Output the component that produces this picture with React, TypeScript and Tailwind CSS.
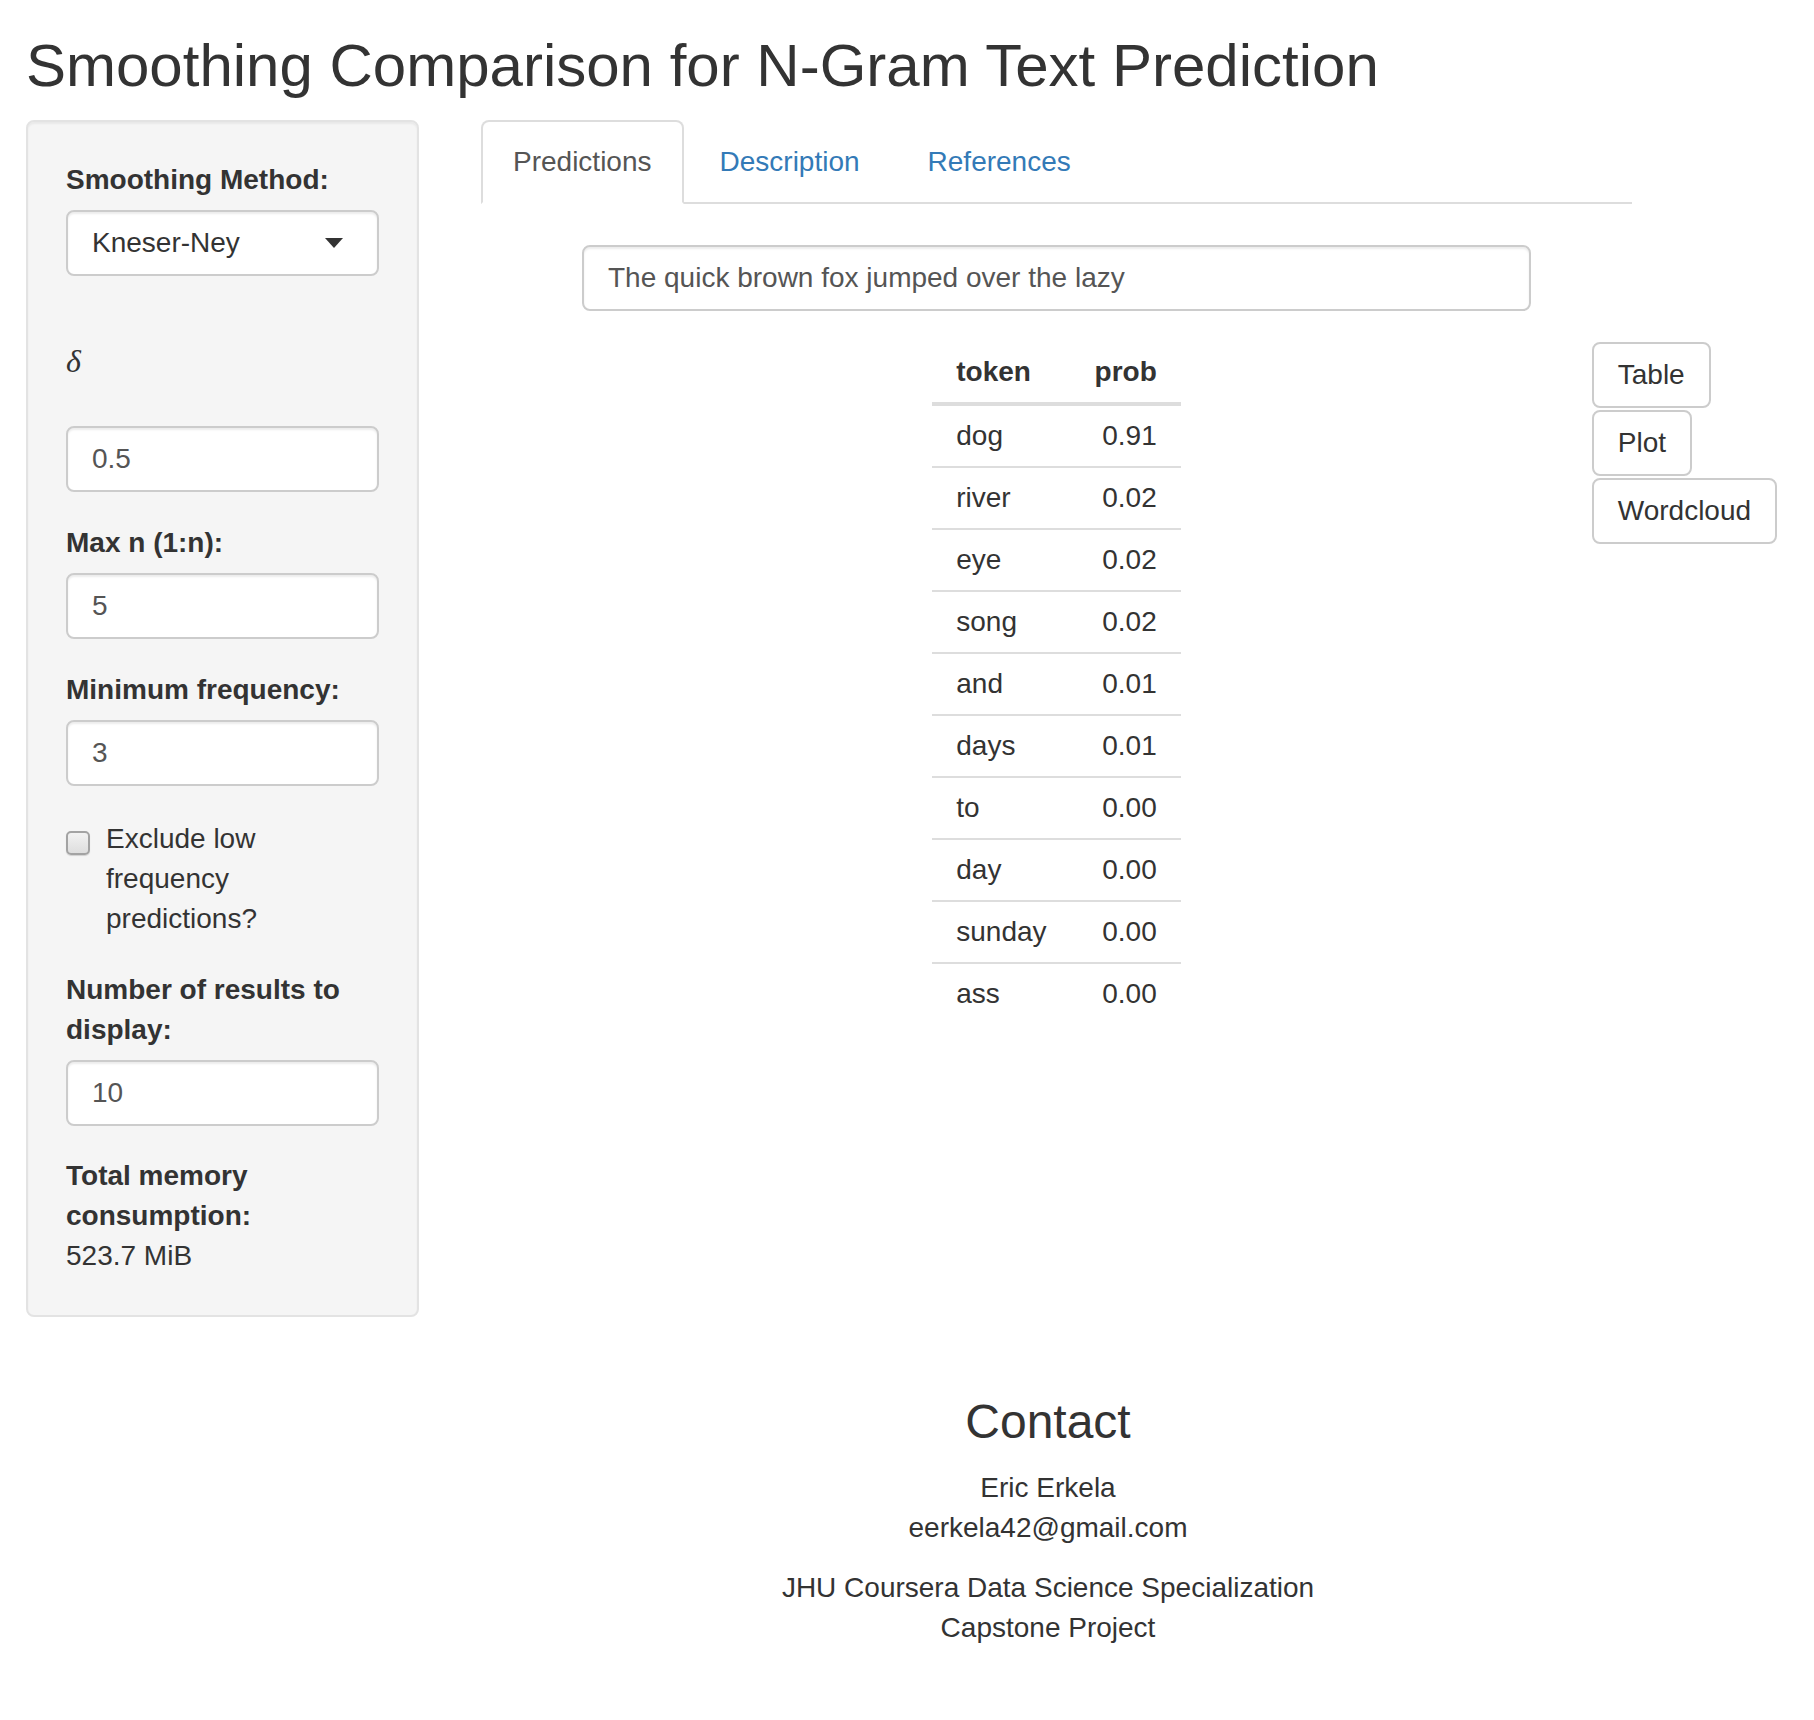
import React from 'react'

const ROWS = [
  { token: 'dog', prob: '0.91' },
  { token: 'river', prob: '0.02' },
  { token: 'eye', prob: '0.02' },
  { token: 'song', prob: '0.02' },
  { token: 'and', prob: '0.01' },
  { token: 'days', prob: '0.01' },
  { token: 'to', prob: '0.00' },
  { token: 'day', prob: '0.00' },
  { token: 'sunday', prob: '0.00' },
  { token: 'ass', prob: '0.00' },
]

function TextBox({ value }: { value: string }) {
  return (
    <div className="h-[66px] w-full rounded-[8px] border-2 border-[#ccc] bg-white px-[24px] py-[11px] leading-[40px] text-[#555] shadow-[inset_0_2px_2px_rgba(0,0,0,0.075)]">
      {value}
    </div>
  )
}

function Label({ children }: { children: React.ReactNode }) {
  return <div className="mb-[10px] font-bold leading-[40px]">{children}</div>
}

export default function App() {
  return (
    <div
      className="min-h-[1720px] bg-white pl-[26px] text-[28px] leading-[40px] text-[#333]"
      style={{ fontFamily: '"Liberation Sans", Arial, sans-serif' }}
    >
      <h1 className="mt-[33px] mb-[21px] text-[60px] font-normal leading-[66px]">
        Smoothing Comparison for N-Gram Text Prediction
      </h1>

      <div className="flex items-start">
        {/* sidebar */}
        <div className="w-[393px] shrink-0 rounded-[8px] border-2 border-[#e3e3e3] bg-[#f5f5f5] px-[38px] pt-[38px] pb-[39px] shadow-[inset_0_2px_2px_rgba(0,0,0,0.05)]">
          <Label>Smoothing Method:</Label>
          <div className="flex h-[66px] items-center justify-between rounded-[8px] border-2 border-[#ccc] bg-white pl-[24px] pr-[34px] shadow-[inset_0_2px_2px_rgba(0,0,0,0.075)]">
            <span>Kneser-Ney</span>
            <span className="h-0 w-0 border-x-[9px] border-t-[10px] border-x-transparent border-t-[#333]" />
          </div>

          <div className="mt-[30px] mb-[10px] flex h-[110px] items-center">
            <span className="text-[32px] italic" style={{ fontFamily: '"Liberation Serif", "Times New Roman", serif' }}>
              δ
            </span>
          </div>
          <TextBox value="0.5" />

          <div className="mt-[31px]">
            <Label>Max n (1:n):</Label>
            <TextBox value="5" />
          </div>

          <div className="mt-[31px]">
            <Label>Minimum frequency:</Label>
            <TextBox value="3" />
          </div>

          <div className="mt-[33px] flex items-start">
            <span className="mt-[12px] h-[24px] w-[24px] shrink-0 rounded-[5px] border-2 border-[#a3a3a3] bg-gradient-to-b from-[#f2f2f2] to-[#dedede] shadow-[0_1px_1px_rgba(0,0,0,0.15)]" />
            <span className="ml-[16px]">Exclude low frequency predictions?</span>
          </div>

          <div className="mt-[31px]">
            <Label>Number of results to display:</Label>
            <TextBox value="10" />
          </div>

          <div className="mt-[30px]">
            <div className="font-bold">Total memory consumption:</div>
            <div>523.7 MiB</div>
          </div>
        </div>

        {/* main panel */}
        <div className="ml-[62px] w-[1151px] shrink-0">
          <ul className="flex border-b-2 border-[#ddd]">
            <li className="-mb-[2px] mr-[4px]">
              <span className="block rounded-t-[8px] border-2 border-[#ddd] border-b-transparent bg-white px-[30px] py-[20px] leading-[40px] text-[#555]">
                Predictions
              </span>
            </li>
            <li className="-mb-[2px] mr-[4px]">
              <span className="block border-2 border-transparent px-[30px] py-[20px] leading-[40px] text-[#337ab7]">
                Description
              </span>
            </li>
            <li className="-mb-[2px] mr-[4px]">
              <span className="block border-2 border-transparent px-[30px] py-[20px] leading-[40px] text-[#337ab7]">
                References
              </span>
            </li>
          </ul>

          <div className="mx-auto mt-[41px] w-[949px]">
            <TextBox value="The quick brown fox jumped over the lazy" />
          </div>

          <div className="mt-[31px] grid grid-cols-[minmax(0,1fr)_auto_minmax(0,1fr)]">
            <div />
            <table className="border-collapse">
              <thead>
                <tr>
                  <th className="border-b-4 border-[#ddd] px-[24px] py-[10px] text-left font-bold leading-[40px]">token</th>
                  <th className="border-b-4 border-[#ddd] px-[24px] py-[10px] text-right font-bold leading-[40px]">prob</th>
                </tr>
              </thead>
              <tbody>
                {ROWS.map((r, i) => (
                  <tr key={r.token} className={i === 0 ? '' : 'border-t-2 border-[#ddd]'}>
                    <td className="px-[24px] py-[10px] leading-[40px]">{r.token}</td>
                    <td className="px-[24px] py-[10px] text-right leading-[40px]">{r.prob}</td>
                  </tr>
                ))}
              </tbody>
            </table>
            <div className="ml-[411px] flex flex-col items-start gap-[2px]">
              {['Table', 'Plot', 'Wordcloud'].map(b => (
                <button
                  key={b}
                  className="w-max rounded-[8px] border-2 border-[#ccc] bg-white px-[24px] py-[11px] leading-[40px] text-[#333]"
                >
                  {b}
                </button>
              ))}
            </div>
          </div>
        </div>
      </div>

      {/* footer */}
      <div className="mt-[78px] ml-[455px] w-[1134px] text-center">
        <h3 className="mb-[20px] text-[48px] font-normal leading-[53px]">Contact</h3>
        <p>
          Eric Erkela
          <br />
          eerkela42@gmail.com
        </p>
        <p className="mt-[20px]">
          JHU Coursera Data Science Specialization
          <br />
          Capstone Project
        </p>
      </div>
    </div>
  )
}
